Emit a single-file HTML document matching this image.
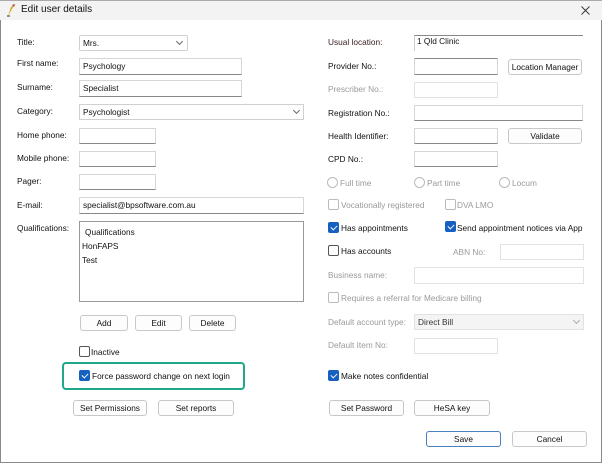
<!DOCTYPE html>
<html><head><style>
*{margin:0;padding:0;box-sizing:border-box}
body{width:602px;height:463px;background:#fff;font-family:"Liberation Sans",sans-serif;font-size:8.3px;color:#111;position:relative;overflow:hidden}
.win{position:absolute;left:0;top:0;width:602px;height:463px;border:1px solid #8a8a8a;border-top:none;background:#fff}
.tb{position:absolute;left:0;top:0;width:602px;height:20px;background:#f3f3f3;border-top:1px solid #aaa}
.a{position:absolute;white-space:nowrap;line-height:12px}
.l{position:absolute;white-space:nowrap;line-height:12px}
.g{color:#9a9a9a}
.in{position:absolute;border:1px solid #d6d6d6;border-bottom-color:#888;background:#fff;padding-left:3px;line-height:14px;white-space:nowrap}
.ing{position:absolute;border:1px solid #e2e2e2;background:#fff}
.btn{position:absolute;border:1px solid #c8c8c8;border-radius:3px;background:#fdfdfd;text-align:center;line-height:14px;white-space:nowrap}
.cb{position:absolute;width:11px;height:11px;border:1px solid #555;border-radius:2px;background:#fff}
.cbg{border-color:#bbb}
.cbc{background:#1560c0;border-color:#1560c0}
.cbc:after{content:"";position:absolute;left:3px;top:1px;width:3px;height:5px;border:solid #fff;border-width:0 1px 1px 0;transform:rotate(45deg)}
.rd{position:absolute;width:11px;height:11px;border:1px solid #bbb;border-radius:50%}
.chev{position:absolute;width:5px;height:5px;border:solid #666;border-width:0 1px 1px 0;transform:rotate(45deg)}
</style></head><body>
<div class="win"></div>
<div class="tb"></div>
<svg style="position:absolute;left:6px;top:4px" width="10" height="13" viewBox="0 0 10 13"><path d="M2 12 L5 3 L8 1 L6 5 Z" fill="#d9a21b"/><path d="M6 1 L9 0 L8 3 Z" fill="#c0392b"/><path d="M1 12 L4 12" stroke="#333" stroke-width="1"/></svg>
<div class="a" style="left:21px;top:4px;font-size:10px">Edit user details</div>
<svg style="position:absolute;left:581px;top:6px" width="9" height="9" viewBox="0 0 9 9"><path d="M0.5 0.5L8.5 8.5M8.5 0.5L0.5 8.5" stroke="#333" stroke-width="0.9"/></svg>

<div class="l" style="left:17px;top:36px">Title:</div>
<div class="in" style="left:79px;top:35px;width:109px;height:16px;border-color:#d0d0d0;border-radius:2px">Mrs.</div><div class="chev" style="left:177px;top:39px"></div>
<div class="l" style="left:17px;top:57px">First name:</div>
<div class="in" style="left:79px;top:58px;width:163px;height:17px">Psychology</div>
<div class="l" style="left:17px;top:81px">Surname:</div>
<div class="in" style="left:79px;top:80px;width:163px;height:17px">Specialist</div>
<div class="l" style="left:17px;top:105px">Category:</div>
<div class="in" style="left:79px;top:104px;width:225px;height:16px;border-color:#d0d0d0">Psychologist</div><div class="chev" style="left:294px;top:108px"></div>
<div class="l" style="left:17px;top:129px">Home phone:</div>
<div class="in" style="left:79px;top:128px;width:77px;height:16px"></div>
<div class="l" style="left:17px;top:152px">Mobile phone:</div>
<div class="in" style="left:79px;top:151px;width:77px;height:16px"></div>
<div class="l" style="left:17px;top:175px">Pager:</div>
<div class="in" style="left:79px;top:174px;width:77px;height:16px"></div>
<div class="l" style="left:17px;top:199px">E-mail:</div>
<div class="in" style="left:79px;top:197px;width:225px;height:17px">specialist@bpsoftware.com.au</div>
<div class="l" style="left:17px;top:222px">Qualifications:</div>
<div class="in" style="left:79px;top:221px;width:225px;height:81px;border:1px solid #999;padding:0"></div>
<div class="l" style="left:85px;top:226px">Qualifications</div>
<div class="l" style="left:82px;top:240px">HonFAPS</div>
<div class="l" style="left:82px;top:254px">Test</div>
<div class="btn" style="left:80px;top:315px;width:48px;height:16px">Add</div>
<div class="btn" style="left:135px;top:315px;width:47px;height:16px">Edit</div>
<div class="btn" style="left:189px;top:315px;width:47px;height:16px">Delete</div>
<div class="cb" style="left:79px;top:346px"></div><div class="l" style="left:91px;top:346px">Inactive</div>
<div style="position:absolute;left:62px;top:362px;width:183px;height:28px;border:2px solid #1fa88a;border-radius:4px"></div>
<div class="cb cbc" style="left:79px;top:370px"></div><div class="l" style="left:92px;top:370px">Force password change on next login</div>
<div class="btn" style="left:73px;top:400px;width:74px;height:16px">Set Permissions</div>
<div class="btn" style="left:158px;top:400px;width:76px;height:16px">Set reports</div>

<div class="l" style="left:328px;top:36px;color:#3a2020">Usual location:</div>
<div style="position:absolute;left:414px;top:35px;width:169px;height:16px;border-top:1px solid #888;border-left:1px solid #ccc;padding-left:2px;line-height:11px">1 Qld Clinic</div>
<div class="l" style="left:328px;top:60px">Provider No.:</div>
<div class="in" style="left:414px;top:58px;width:84px;height:17px;border-top-color:#888"></div>
<div class="btn" style="left:508px;top:59px;width:74px;height:16px">Location Manager</div>
<div class="l g" style="left:328px;top:83px">Prescriber No.:</div>
<div class="ing" style="left:414px;top:82px;width:84px;height:16px"></div>
<div class="l" style="left:328px;top:107px">Registration No.:</div>
<div class="in" style="left:414px;top:105px;width:169px;height:16px"></div>
<div class="l" style="left:328px;top:130px">Health Identifier:</div>
<div class="in" style="left:414px;top:128px;width:84px;height:16px"></div>
<div class="btn" style="left:508px;top:128px;width:74px;height:16px">Validate</div>
<div class="l" style="left:328px;top:153px">CPD No.:</div>
<div class="in" style="left:414px;top:151px;width:84px;height:16px"></div>
<div class="rd" style="left:327px;top:177px"></div><div class="l g" style="left:340px;top:177px">Full time</div>
<div class="rd" style="left:414px;top:177px"></div><div class="l g" style="left:427px;top:177px">Part time</div>
<div class="rd" style="left:499px;top:177px"></div><div class="l g" style="left:512px;top:177px">Locum</div>
<div class="cb cbg" style="left:328px;top:199px"></div><div class="l g" style="left:341px;top:199px">Vocationally registered</div>
<div class="cb cbg" style="left:445px;top:199px"></div><div class="l g" style="left:457px;top:199px">DVA LMO</div>
<div class="cb cbc" style="left:328px;top:222px"></div><div class="l" style="left:341px;top:222px">Has appointments</div>
<div class="cb cbc" style="left:445px;top:221px"></div><div class="l" style="left:457px;top:222px">Send appointment notices via App</div>
<div class="cb" style="left:328px;top:245px"></div><div class="l" style="left:341px;top:245px">Has accounts</div>
<div class="l g" style="left:453px;top:246px">ABN No:</div>
<div class="ing" style="left:500px;top:244px;width:84px;height:16px"></div>
<div class="l g" style="left:328px;top:269px">Business name:</div>
<div class="ing" style="left:414px;top:267px;width:170px;height:17px"></div>
<div class="cb cbg" style="left:328px;top:292px"></div><div class="l g" style="left:341px;top:292px">Requires a referral for Medicare billing</div>
<div class="l g" style="left:328px;top:316px">Default account type:</div>
<div class="ing" style="left:414px;top:314px;width:170px;height:16px;background:#f4f4f4;padding-left:3px;line-height:14px;color:#333">Direct Bill</div><div class="chev" style="left:574px;top:318px;border-color:#aaa"></div>
<div class="l g" style="left:328px;top:339px">Default Item No:</div>
<div class="ing" style="left:414px;top:338px;width:84px;height:16px"></div>
<div class="cb cbc" style="left:328px;top:370px"></div><div class="l" style="left:341px;top:370px">Make notes confidential</div>
<div class="btn" style="left:329px;top:400px;width:75px;height:16px">Set Password</div>
<div class="btn" style="left:414px;top:400px;width:76px;height:16px">HeSA key</div>
<div class="btn" style="left:426px;top:431px;width:75px;height:16px;border-color:#4a7fc1">Save</div>
<div class="btn" style="left:512px;top:431px;width:75px;height:16px">Cancel</div>
</body></html>
